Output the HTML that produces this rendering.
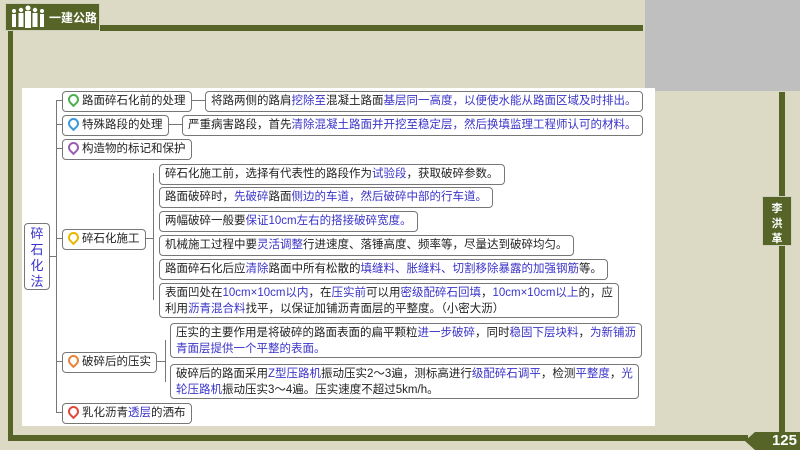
<!DOCTYPE html>
<html><head><meta charset="utf-8"><style>
*{margin:0;padding:0;box-sizing:border-box}
body{width:800px;height:450px;overflow:hidden;background:#dcd9c4;position:relative;font-family:"Liberation Sans","Noto Sans CJK SC",sans-serif;font-size:11.5px;color:#222}
.a{position:absolute}
.olive{background:#566427}
.box{position:absolute;border:1px solid #777;border-radius:4px;background:#fff;padding:0 5px;line-height:19px;white-space:nowrap}
.b{color:#3a33c8}
.ln{position:absolute;background:#777}
.pin{display:inline-block;width:11px;height:11px;border-radius:50% 50% 50% 0;transform:rotate(-45deg);vertical-align:-1px;margin-right:3px;border:2px solid}
</style></head><body>
<div class="a" style="left:645px;top:0;width:155px;height:91px;background:#bfbfbf"></div>
<div class="a olive" style="left:5px;top:3px;width:95px;height:28px;border:1px solid #cfcfbf"></div>
<svg class="a" style="left:10px;top:5px" width="36" height="24" viewBox="0 0 36 24" fill="#fff">
<circle cx="4" cy="6" r="2"/><rect x="2" y="9" width="4" height="13"/>
<circle cx="11" cy="5" r="2.2"/><rect x="8.5" y="8" width="5" height="14"/>
<circle cx="18" cy="3" r="2.5"/><rect x="15" y="6" width="6" height="17"/>
<circle cx="25" cy="5" r="2.2"/><rect x="22.5" y="8" width="5" height="14"/>
<circle cx="32" cy="6" r="2"/><rect x="30" y="9" width="4" height="13"/>
</svg>
<div class="a" style="left:49px;top:9px;color:#fff;font-size:12px;font-weight:bold">一建公路</div>
<div class="a olive" style="left:100px;top:25px;width:543px;height:6px"></div>
<div class="a olive" style="left:8px;top:31px;width:5px;height:410px"></div>
<div class="a olive" style="left:8px;top:435px;width:740px;height:6px"></div>
<div class="a olive" style="left:779px;top:92px;width:6px;height:343px"></div>
<div class="a olive" style="left:762px;top:196px;width:30px;height:50px;border:1px solid #cfcfbf;color:#fff;font-size:11px;font-weight:bold;text-align:center;line-height:15px;padding-top:5px">李<br>洪<br>革</div>
<div class="a olive" style="left:745px;top:432px;width:60px;height:18px;clip-path:polygon(10px 0,100% 0,100% 100%,10px 100%,0 50%);color:#fff;font-weight:bold;font-size:15px;text-align:right;padding-right:8px;line-height:18px">125</div>
<div class="a" style="left:22px;top:88px;width:633px;height:338px;background:#fff"></div>

<div class="box b" style="left:24px;top:223px;width:26px;height:67px;padding:2px 0;text-align:center;line-height:16px;font-size:13px">碎<br>石<br>化<br>法</div>
<div class="ln" style="left:50px;top:256px;width:6px;height:1px"></div>
<div class="ln" style="left:56px;top:100px;width:1px;height:313px"></div>

<div class="ln" style="left:56px;top:100px;width:150px;height:1px"></div>
<div class="box" style="left:62px;top:91px"><span class="pin" style="border-color:#4caf50"></span>路面碎石化前的处理</div>
<div class="box" style="left:205px;top:91px">将路两侧的路肩<span class="b">挖除至</span>混凝土路面<span class="b">基层同一高度，以便使水能从路面区域及时排出。</span></div>

<div class="ln" style="left:56px;top:124px;width:126px;height:1px"></div>
<div class="box" style="left:62px;top:115px"><span class="pin" style="border-color:#3a9ad9"></span>特殊路段的处理</div>
<div class="box" style="left:182px;top:115px">严重病害路段，首先<span class="b">清除混凝土路面并开挖至稳定层，然后换填监理工程师认可的材料。</span></div>

<div class="ln" style="left:56px;top:148px;width:6px;height:1px"></div>
<div class="box" style="left:62px;top:139px"><span class="pin" style="border-color:#9a5fb0"></span>构造物的标记和保护</div>

<div class="ln" style="left:56px;top:238px;width:98px;height:1px"></div>
<div class="box" style="left:62px;top:229px"><span class="pin" style="border-color:#e6b800"></span>碎石化施工</div>
<div class="ln" style="left:153px;top:173px;width:1px;height:127px"></div>
<div class="box" style="left:159px;top:164px">碎石化施工前，选择有代表性的路段作为<span class="b">试验段</span>，获取破碎参数。</div>
<div class="box" style="left:159px;top:187px">路面破碎时，<span class="b">先破碎</span>路面<span class="b">侧边的车道，然后破碎中部的行车道。</span></div>
<div class="box" style="left:159px;top:211px">两幅破碎一般要<span class="b">保证10cm左右的搭接破碎宽度。</span></div>
<div class="box" style="left:159px;top:235px">机械施工过程中要<span class="b">灵活调整</span>行进速度、落锤高度、频率等，尽量达到破碎均匀。</div>
<div class="box" style="left:159px;top:259px">路面碎石化后应<span class="b">清除</span>路面中所有松散的<span class="b">填缝料、胀缝料、切割移除暴露的加强钢筋</span>等。</div>
<div class="box" style="left:159px;top:283px;height:35px;line-height:16px;padding-top:1px">表面凹处在<span class="b">10cm×10cm以内</span>，在<span class="b">压实前</span>可以用<span class="b">密级配碎石回填</span>，<span class="b">10cm×10cm以上</span>的，应<br>利用<span class="b">沥青混合料</span>找平，以保证加铺沥青面层的平整度。（小密大沥）</div>

<div class="ln" style="left:56px;top:361px;width:110px;height:1px"></div>
<div class="box" style="left:62px;top:352px"><span class="pin" style="border-color:#e8833a"></span>破碎后的压实</div>
<div class="ln" style="left:165px;top:340px;width:1px;height:42px"></div>
<div class="box" style="left:170px;top:323px;height:35px;line-height:16px;padding-top:1px">压实的主要作用是将破碎的路面表面的扁平颗粒<span class="b">进一步破碎</span>，同时<span class="b">稳固下层块料</span>，<span class="b">为新铺沥<br>青面层提供一个平整的表面。</span></div>
<div class="box" style="left:170px;top:364px;height:35px;line-height:16px;padding-top:1px">破碎后的路面采用<span class="b">Z型压路机</span>振动压实2～3遍，测标高进行<span class="b">级配碎石调平</span>，检测<span class="b">平整度</span>，<span class="b">光<br>轮压路机</span>振动压实3～4遍。压实速度不超过5km/h。</div>

<div class="ln" style="left:56px;top:412px;width:6px;height:1px"></div>
<div class="box" style="left:62px;top:403px"><span class="pin" style="border-color:#e04a3a"></span>乳化沥青<span class="b">透层</span>的洒布</div>
</body></html>
